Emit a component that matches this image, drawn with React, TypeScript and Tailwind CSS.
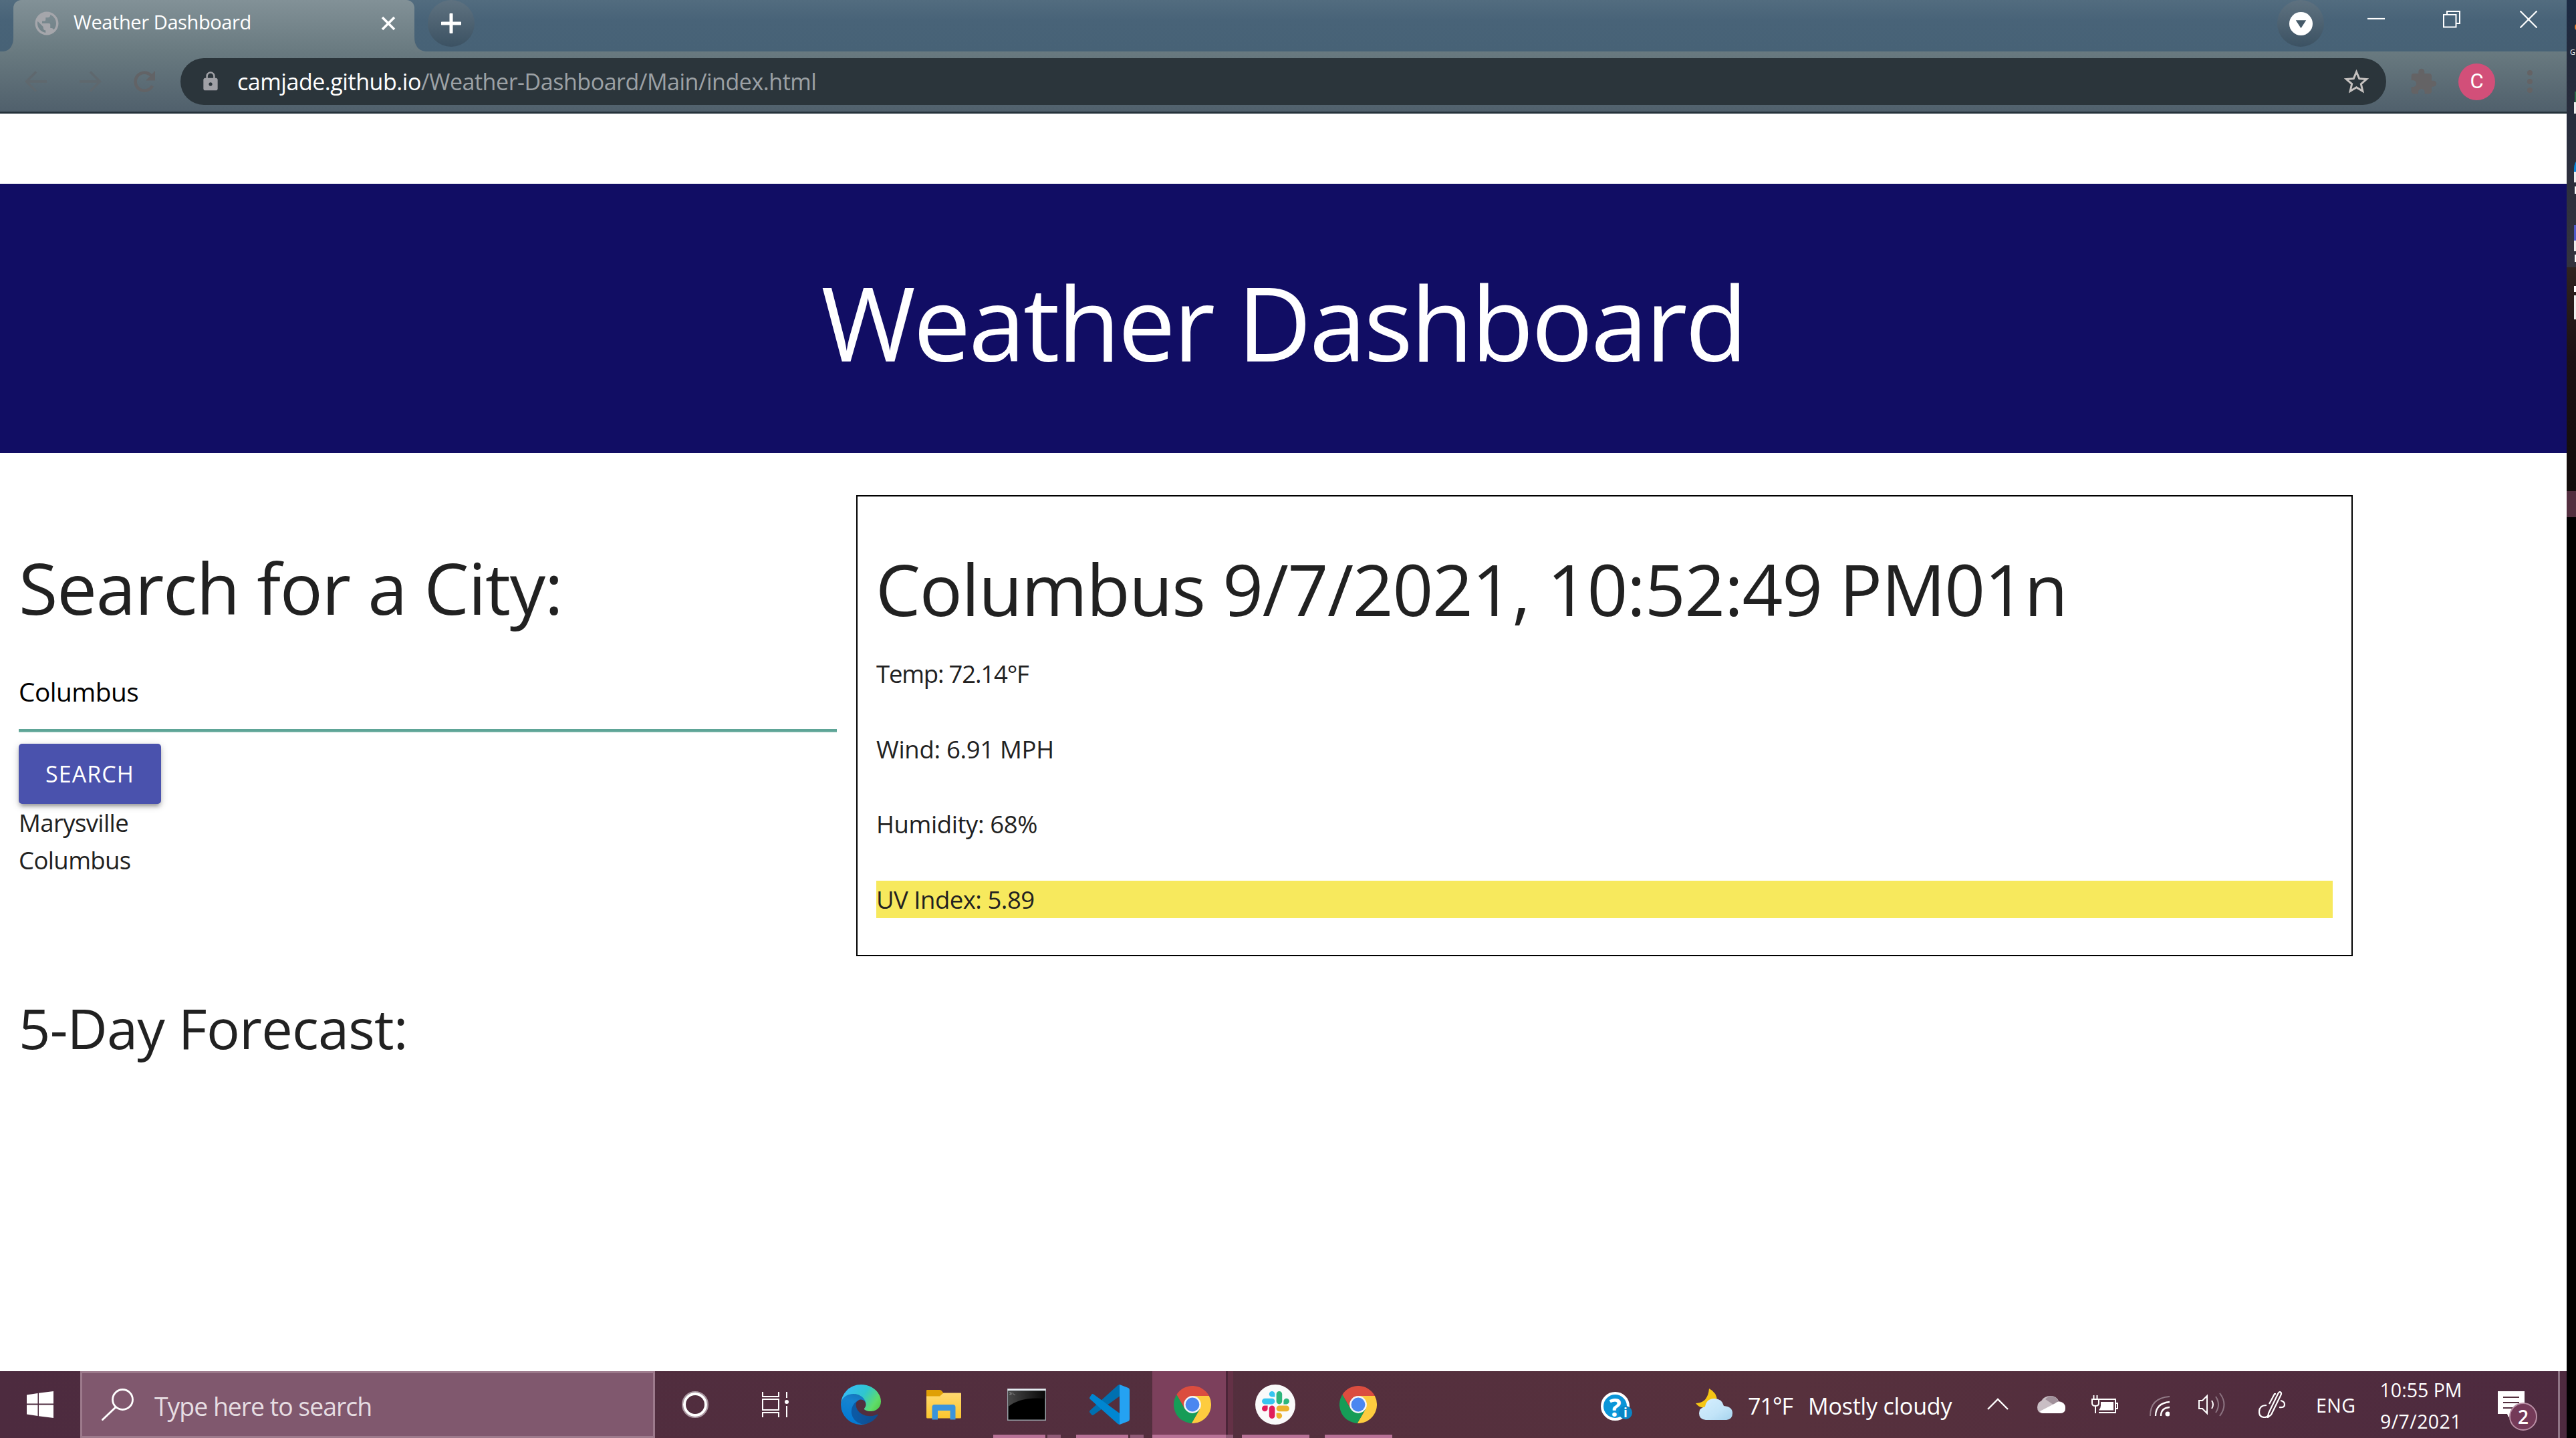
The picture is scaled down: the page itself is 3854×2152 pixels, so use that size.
import type { ReactNode } from 'react';
import { MdExtension, MdLock, MdPublic, MdStarBorder } from 'react-icons/md';

/* ---------- Application icons ---------- */

function ChromeIcon() {
  return (
    <svg viewBox="0 0 100 100" className="h-[56px] w-[56px]">
      <path d="M94.4 27A50 50 0 0 1 47.7 100L69.9 61.5L50 50L50 27Z" fill="#fdcc3f" />
      <path d="M47.7 100A50 50 0 0 1 7.9 23L30.1 61.5L50 50L69.9 61.5Z" fill="#169c57" />
      <path d="M7.9 23A50 50 0 0 1 94.4 27L50 27L50 50L30.1 61.5Z" fill="#db4d3f" />
      <circle cx="50" cy="50" r="23" fill="#f3f5f8" />
      <circle cx="50" cy="50" r="18.6" fill="#4a87f0" />
    </svg>
  );
}

function EdgeIcon() {
  return (
    <svg viewBox="0 0 256 256" className="h-[60px] w-[60px]">
      <defs>
        <linearGradient id="edge-dark" x1="0.2" y1="0.7" x2="1" y2="0.7">
          <stop offset="0" stopColor="#0c59a4" />
          <stop offset="1" stopColor="#114a8b" />
        </linearGradient>
        <linearGradient id="edge-mid" x1="0.6" y1="0" x2="0.3" y2="1">
          <stop offset="0" stopColor="#1673b8" />
          <stop offset="0.3" stopColor="#1583d0" />
          <stop offset="1" stopColor="#0078d4" />
        </linearGradient>
        <linearGradient id="edge-top" x1="0" y1="0.3" x2="1" y2="0.75">
          <stop offset="0" stopColor="#38bbfa" />
          <stop offset="0.5" stopColor="#2fc6cf" />
          <stop offset="0.85" stopColor="#5fdc6a" />
          <stop offset="1" stopColor="#55cf52" />
        </linearGradient>
      </defs>
      <g transform="translate(-4.63 -4.92)">
        <path
          fill="url(#edge-dark)"
          d="M235.68 195.46a93.73 93.73 0 0 1-10.54 4.71 101.87 101.87 0 0 1-35.9 6.46c-47.32 0-88.54-32.55-88.54-74.32A31.48 31.48 0 0 1 117.13 105c-42.8 1.8-53.8 46.4-53.8 72.53 0 73.88 68.09 81.37 82.76 81.37 7.91 0 19.84-2.3 27-4.56l1.31-.44a128.34 128.34 0 0 0 66.6-52.8 4 4 0 0 0-5.32-5.64Z"
        />
        <path
          fill="url(#edge-mid)"
          d="M110.34 246.34A79.2 79.2 0 0 1 87.6 225a80.72 80.72 0 0 1 29.53-120c3.12-1.47 8.45-4.13 15.54-4a32.35 32.35 0 0 1 25.69 13 31.88 31.88 0 0 1 6.36 18.66c0-.21 24.46-79.6-80-79.6-43.9 0-80 41.66-80 78.21a130.15 130.15 0 0 0 12.11 56 128 128 0 0 0 156.38 67.11 75.55 75.55 0 0 1-62.78-8Z"
        />
        <path
          fill="url(#edge-top)"
          d="M156.94 153.78c-.81 1.05-3.3 2.5-3.3 5.66 0 2.61 1.7 5.12 4.72 7.23 14.38 10 41.49 8.68 41.56 8.68a59.56 59.56 0 0 0 30.27-8.35 61.38 61.38 0 0 0 30.43-52.88c.26-22.41-8-37.31-11.34-43.91C228.09 28.76 182.35 4.92 132.61 4.92a128 128 0 0 0-128 126.2c.48-36.54 36.8-66.05 80-66.05 3.5 0 23.46.34 42 10.07 16.34 8.58 24.9 18.94 30.85 29.21 6.18 10.67 7.28 24.15 7.28 29.52s-2.74 13.33-7.8 19.91Z"
        />
      </g>
    </svg>
  );
}

function FolderIcon() {
  return (
    <svg viewBox="0 0 52 46" className="h-[46px] w-[52px]">
      <defs>
        <linearGradient id="folder" x1="0" y1="0" x2="0" y2="1">
          <stop offset="0" stopColor="#ffd970" />
          <stop offset="1" stopColor="#fbc62e" />
        </linearGradient>
      </defs>
      <path d="M1 1h19q2 0 3 1.500l3 4v8H0V2q0-1 1-1z" fill="#e0a005" />
      <path d="M0 10.500h20l5.500-5H51q1 0 1 1V42q0 1.500-1.500 1.500h-49Q0 43.500 0 42z" fill="url(#folder)" />
      <path d="M8.500 45.500V27q0-4 4-4h27q4 0 4 4v18.500h-8V32h-18.500v13.500z" fill="#3a94dc" />
    </svg>
  );
}

function TerminalIcon() {
  return (
    <svg viewBox="0 0 58 48" className="h-[48px] w-[58px]">
      <defs>
        <linearGradient id="term" x1="0" y1="0" x2="1" y2="0">
          <stop offset="0" stopColor="#484848" />
          <stop offset="1" stopColor="#080808" />
        </linearGradient>
      </defs>
      <rect width="58" height="48" fill="#98a0a6" />
      <rect x="0.500" y="0.500" width="57" height="2.500" fill="#e8edf3" />
      <rect x="1.500" y="3.500" width="55" height="43" fill="#000" />
      <path d="M1.500 3.500h55v11.500Q20 12 1.500 27z" fill="url(#term)" />
      <path d="M3 6h2v3H3M6 6v3M8 6l1.500 3M10 9.500h2" stroke="#9a9a9a" strokeWidth="0.800" fill="none" />
    </svg>
  );
}

function VsCodeIcon() {
  return (
    <svg viewBox="0 0 60 60" className="h-[60px] w-[60px]">
      <path d="M42.500 1L45 0v17.500L6 45.500q-1.500 1-3-.5L.5 42q-1-1.500 0-3z" fill="#0070b0" />
      <path d="M6 14.500L45 43v17l-2.500-1L.5 21.500q-1-1.200 0-2.500L3 15q1.500-1.500 3-.5z" fill="#0086d1" />
      <path d="M45 0l13 5q2 1 2 3v44q0 2-2 3l-13 5z" fill="#24a2f2" />
    </svg>
  );
}

function SlackIcon() {
  return (
    <div className="flex h-[60px] w-[60px] items-center justify-center rounded-full bg-[#fafafa]">
      <svg viewBox="0 0 122.8 122.8" className="h-[41px] w-[41px]">
        <path fill="#e01e5a" d="M25.800 77.600c0 7.100-5.800 12.900-12.900 12.900S0 84.700 0 77.600s5.800-12.900 12.900-12.900h12.900v12.900zm6.500 0c0-7.100 5.800-12.900 12.900-12.900s12.900 5.800 12.900 12.900v32.300c0 7.100-5.800 12.900-12.900 12.900s-12.900-5.800-12.900-12.900V77.600z" />
        <path fill="#36c5f0" d="M45.200 25.800c-7.100 0-12.900-5.800-12.900-12.900S38.100 0 45.200 0s12.900 5.800 12.900 12.900v12.900H45.200zm0 6.500c7.100 0 12.900 5.800 12.900 12.900s-5.800 12.900-12.900 12.900H12.900C5.800 58.100 0 52.300 0 45.200s5.800-12.900 12.900-12.900h32.300z" />
        <path fill="#2eb67d" d="M97 45.200c0-7.100 5.800-12.900 12.900-12.900s12.900 5.800 12.900 12.900-5.800 12.900-12.900 12.900H97V45.200zm-6.500 0c0 7.100-5.800 12.900-12.900 12.900s-12.900-5.800-12.900-12.900V12.900C64.700 5.800 70.500 0 77.600 0s12.900 5.800 12.900 12.900v32.300z" />
        <path fill="#ecb22e" d="M77.600 97c7.100 0 12.900 5.800 12.900 12.900s-5.800 12.900-12.900 12.900-12.900-5.800-12.900-12.900V97h12.900zm0-6.500c-7.100 0-12.900-5.800-12.900-12.900s5.800-12.900 12.900-12.900h32.300c7.100 0 12.900 5.800 12.900 12.900s-5.800 12.900-12.900 12.900H77.600z" />
      </svg>
    </div>
  );
}

/* ---------- Browser chrome ---------- */

function TabStrip() {
  return (
    <div className="flex h-[77px] items-start bg-linear-to-b from-[#526c7f] via-[#486378] via-40% to-[#476276]">
      <svg viewBox="0 0 15 77" className="ml-[5px] h-[77px] w-[15px]">
        <path d="M15 55v22H0q15-2 15-22z" fill="#6b7b81" />
      </svg>
      <div className="flex h-[77px] w-[600px] items-start rounded-t-[12px] bg-linear-to-b from-[#829197] to-[#697a80] pt-[8px] pr-[28px] pl-[29px]">
        <MdPublic className="mt-[6px] h-[42px] w-[42px] text-[#a5a6ab]" />
        <div className="ml-[19px] text-[29px] leading-[50px] tracking-[-0.4px] text-white">Weather Dashboard</div>
        <svg viewBox="0 0 22 22" className="mt-[16px] ml-auto h-[22px] w-[22px]">
          <path d="M2 2L20 20M20 2L2 20" stroke="#fff" strokeWidth="3.600" />
        </svg>
      </div>
      <svg viewBox="0 0 17 77" className="h-[77px] w-[17px]">
        <path d="M0 55v22h17Q0 75 0 55z" fill="#6b7b81" />
      </svg>
      <div className="ml-[3px] flex h-[70px] w-[70px] items-center justify-center rounded-full bg-linear-to-b from-[#5f7280] to-[#3c5263]">
        <svg viewBox="0 0 30 30" className="h-[30px] w-[30px]">
          <path d="M15 1.500v27M1.500 15h27" stroke="#fff" strokeWidth="5" strokeLinecap="round" />
        </svg>
      </div>
      <div className="ml-auto flex h-[70px] w-[70px] items-center justify-center rounded-full bg-linear-to-b from-[#5f7280] to-[#3c5263]">
        <svg viewBox="0 0 36 36" className="h-[35px] w-[35px]">
          <circle cx="18" cy="18" r="18" fill="#fff" />
          <path d="M10 12.500h16L18 25z" fill="#455a69" />
        </svg>
      </div>
      <svg viewBox="0 0 26 26" className="mt-[16px] ml-[65px] h-[26px] w-[26px]">
        <path d="M0 12h26" stroke="#fff" strokeWidth="2.200" />
      </svg>
      <svg viewBox="0 0 26 26" className="mt-[16px] ml-[87px] h-[26px] w-[26px]" fill="none" stroke="#fff" strokeWidth="2">
        <path d="M1 6h18.500v18.500H1zM6 6V1h19v18h-5" />
      </svg>
      <svg viewBox="0 0 26 26" className="mt-[16px] mr-[44px] ml-[89px] h-[26px] w-[26px]">
        <path d="M.5.5l25 25M25.500.5l-25 25" stroke="#fff" strokeWidth="2.200" />
      </svg>
    </div>
  );
}

function Toolbar() {
  return (
    <div className="flex h-[93px] items-center border-b-[3px] border-[#25323b] bg-linear-to-b from-[#697a80] to-[#50606c]">
      <svg viewBox="0 0 34 32" className="ml-[37px] h-[32px] w-[34px]" fill="none" stroke="#5f686e" strokeWidth="3.500">
        <path d="M33 16H3M17 1.500L2.500 16L17 30.500" />
      </svg>
      <svg viewBox="0 0 34 32" className="ml-[47px] h-[32px] w-[34px]" fill="none" stroke="#5f686e" strokeWidth="3.500">
        <path d="M1 16h30M17 1.500L31.500 16L17 30.500" />
      </svg>
      <svg viewBox="0 0 34 32" className="ml-[47px] h-[32px] w-[34px]">
        <path d="M29 22.500A13.500 13.500 0 1 1 27 7" fill="none" stroke="#626366" strokeWidth="4.500" />
        <path d="M33 0v14.500H19z" fill="#626366" />
      </svg>
      <div className="ml-[37px] flex h-[70px] w-[3300px] items-center rounded-full bg-[#2b353b] pr-[22px] pl-[29px]">
        <MdLock className="h-[32px] w-[32px] text-[#a0a1a6]" />
        <div className="ml-[24px] text-[34px] leading-[64px] tracking-[-0.45px] text-white">camjade.github.io</div>
        <div className="text-[34px] leading-[64px] tracking-[-0.46px] text-[#9ca1a5]">/Weather-Dashboard/Main/index.html</div>
        <MdStarBorder className="ml-auto h-[45px] w-[45px] text-[#c5c1bf]" />
      </div>
      <MdExtension className="ml-[34px] h-[43px] w-[43px] text-[#646365]" />
      <div className="ml-[31px] flex h-[55px] w-[55px] items-center justify-center rounded-full bg-[#d24f79] font-['Roboto',sans-serif] text-[31px] text-white">
        C
      </div>
      <div className="ml-[48px] flex flex-col gap-[5px]">
        <div className="h-[8px] w-[8px] rounded-full bg-[#646365]" />
        <div className="h-[8px] w-[8px] rounded-full bg-[#646365]" />
        <div className="h-[8px] w-[8px] rounded-full bg-[#646365]" />
      </div>
    </div>
  );
}

/* ---------- Web page ---------- */

function SearchColumn() {
  return (
    <section className="ml-[28px] w-[1224px] pt-[141px]">
      <h3 className="text-[106.500px] leading-[120px] tracking-[-1.250px] whitespace-nowrap">Search for a City:</h3>
      <div className="mt-[41px] h-[115px] border-b-4 border-[#5ea597] text-[38.800px] leading-[111px] tracking-[-0.500px] text-black shadow-[0_1px_0_0_#a3cbc3]">
        Columbus
      </div>
      <button className="mt-[18px] flex h-[90px] w-[213px] items-center justify-center rounded-[5px] bg-[#4a52ad] text-[34px] leading-[90px] tracking-[1.100px] text-white shadow-[0_5px_5px_0_rgba(0,0,0,0.14),0_8px_3px_-5px_rgba(0,0,0,0.12),0_3px_12px_0_rgba(0,0,0,0.2)]">
        SEARCH
      </button>
      <div className="text-[36.500px] leading-[56.250px] tracking-[-0.600px]">
        <div>Marysville</div>
        <div>Columbus</div>
      </div>
    </section>
  );
}

function CurrentWeather() {
  return (
    <section className="mt-[63px] ml-[29px] h-[690px] w-[2239px] border-2 border-black px-[28px] pt-[78px]">
      <h3 className="-ml-[1px] text-[106.500px] leading-[120px] tracking-[-1.300px] whitespace-nowrap">
        Columbus 9/7/2021, 10:52:49 PM01n
      </h3>
      <div className="mt-[39px] flex flex-col gap-[56.250px] text-[36.500px] leading-[56.250px]">
        <p className="tracking-[-1.200px]">Temp: 72.14°F</p>
        <p className="tracking-[-0.300px]">Wind: 6.91 MPH</p>
        <p className="tracking-[-0.400px]">Humidity: 68%</p>
        <p className="bg-[#f7e95d] tracking-[-0.500px]">UV Index: 5.89</p>
      </div>
    </section>
  );
}

function WeatherPage() {
  return (
    <main className="h-[1882px] bg-white pt-[105px] text-[#212121]">
      <header className="flex h-[403px] items-center justify-center bg-[#110d64] pt-[10px]">
        <h1 className="text-[153px] leading-[1] tracking-[-3.250px] text-white">Weather Dashboard</h1>
      </header>
      <div className="flex items-start">
        <SearchColumn />
        <CurrentWeather />
      </div>
      <h4 className="mt-[60px] ml-[28px] text-[83px] leading-[94px] tracking-[-0.800px]">5-Day Forecast:</h4>
    </main>
  );
}

/* ---------- Taskbar ---------- */

type Running = 'none' | 'single' | 'stacked' | 'active';

function TaskButton({ children, running = 'none' }: { children: ReactNode; running?: Running }) {
  return (
    <div className="relative h-[100px] w-[124px]">
      {running === 'active' && (
        <div className="absolute inset-y-0 left-[2px] flex w-[121px]">
          <div className="w-[110px] bg-[#7c405c]" />
          <div className="w-[3px] bg-[#4b2538]" />
          <div className="w-[8px] bg-[#643146]" />
        </div>
      )}
      <div className="relative flex h-full items-center justify-center">{children}</div>
      {running === 'single' && <div className="absolute bottom-0 left-[12px] h-[5px] w-[101px] bg-[#b87297]" />}
      {running === 'stacked' && (
        <div className="absolute bottom-0 left-[12px] flex h-[5px] gap-[3px]">
          <div className="w-[78px] bg-[#b87297]" />
          <div className="w-[20px] bg-[#905b77]" />
        </div>
      )}
      {running === 'active' && (
        <div className="absolute bottom-0 left-[2px] flex h-[5px]">
          <div className="w-[110px] bg-[#b87297]" />
          <div className="w-[11px] bg-[#905b77]" />
        </div>
      )}
    </div>
  );
}

function HelpIcon() {
  return (
    <div className="relative h-[43px] w-[43px] rounded-full border-4 border-white bg-[#0a95d8]">
      <div className="absolute inset-0 flex items-center justify-center text-[38px] leading-none font-bold text-white">?</div>
      <div className="absolute -right-[8px] -bottom-[2px] flex h-[20px] w-[20px] items-center justify-center rounded-full bg-[#0a85c6] text-[19px] leading-none font-bold text-white">
        i
      </div>
    </div>
  );
}

function CloudMoonIcon() {
  return (
    <svg viewBox="0 0 56 48" className="h-[48px] w-[56px]">
      <defs>
        <linearGradient id="cloud" x1="0" y1="0" x2="1" y2="1">
          <stop offset="0" stopColor="#d6efff" />
          <stop offset="0.600" stopColor="#c2e4f8" />
          <stop offset="1" stopColor="#a5d3ee" />
        </linearGradient>
      </defs>
      <path d="M20 0q12 6 12 19L16 28Q6 30 0 22q18 0 20-22z" fill="#f6c614" />
      <path d="M15 47Q5 46 5 37q0-8 9-10 2-12 14-12 11 0 14 11 13 1 13 11 0 9-9 10z" fill="url(#cloud)" />
    </svg>
  );
}

function SystemTray() {
  return (
    <div className="ml-auto flex h-full items-center text-white">
      <div className="mt-[5px]">
        <HelpIcon />
      </div>
      <div className="ml-[99px]">
        <CloudMoonIcon />
      </div>
      <div className="ml-[22px] w-[90px] pt-[3px] text-[34px] leading-[100px] tracking-[-1px] whitespace-nowrap">71°F</div>
      <div className="w-[218px] pt-[3px] text-[34px] leading-[100px] tracking-[-0.200px] whitespace-nowrap">Mostly cloudy</div>
      <svg viewBox="0 0 32 18" className="-mt-[2px] ml-[50px] h-[18px] w-[32px]">
        <path d="M1 17L16 2l15 15" fill="none" stroke="#fff" strokeWidth="2.400" />
      </svg>
      <svg viewBox="0 0 42 26" className="ml-[43px] h-[26px] w-[42px]">
        <path d="M9 26Q0 26 0 17q0-7 6-9.500Q10 0 20 0q9 0 12 8 10 1 10 10 0 8-8 8z" fill="#c9bec4" />
        <path d="M12 5Q20-4 29 4q2 2 3 4L24 13z" fill="#a0909a" />
        <path d="M4 23L27 11q3-3 7-2 8 2 8 9 0 8-8 8H9q-4 0-5-3z" fill="#fff" />
      </svg>
      <svg viewBox="0 0 40 28" className="ml-[39px] h-[28px] w-[40px]">
        <path d="M11 6h25v20H11M36 12h3v8h-3" fill="none" stroke="#fff" strokeWidth="2" />
        <path d="M14 10h19v12.500H11q3-3 3-7z" fill="#fff" />
        <path d="M3.500 0v6M8.500 0v6M1 6h10v6q0 4-5 4t-5-4zM6 16v11" fill="none" stroke="#fff" strokeWidth="2" />
      </svg>
      <svg viewBox="0 0 30 31" className="mt-[4px] ml-[47px] h-[31px] w-[30px]" fill="none">
        <path d="M1 30Q1 3 30 1" stroke="#937c88" strokeWidth="2" />
        <path d="M9 30Q9 11 30 9M17 30q0-12 13-13" stroke="#fff" strokeWidth="2.300" />
        <circle cx="27" cy="27" r="3.500" fill="#fff" />
      </svg>
      <svg viewBox="0 0 40 36" className="ml-[43px] h-[36px] w-[40px]" fill="none" strokeWidth="2">
        <path d="M1 12h5l7-7v26l-7-7H1z" stroke="#fff" />
        <path d="M20 12q4 6 0 12" stroke="#fff" />
        <path d="M26 6q8 12 0 24M32 1q13 17 0 34" stroke="#8c7481" />
      </svg>
      <svg viewBox="0 0 40 40" className="ml-[50px] h-[40px] w-[40px]" fill="none" stroke="#fff" strokeWidth="2.200">
        <path d="M15 33L29 4q2-4 4-2.500 2 1.500 0 5L19 35l-5 4zM26 4h-2l-8 15M12 21Q1 21 1 31q0 8 8 8 6 0 6-6M33 14q6 1 6 6t-8 4" />
      </svg>
      <div className="ml-[46px] w-[62px] pt-[2px] text-[28.500px] leading-[100px] tracking-[0.500px]">ENG</div>
      <div className="ml-[24px] flex w-[142px] flex-col items-center pt-[3px] text-[28.500px] leading-[47px]">
        <div>10:55 PM</div>
        <div className="tracking-[0.400px]">9/7/2021</div>
      </div>
      <div className="relative ml-[44px] h-[40px] w-[40px]">
        <svg viewBox="0 0 40 40" className="h-[40px] w-[40px]">
          <path d="M0 0h40v34H21l-5 5-2-5H0z" fill="#fff" />
          <path d="M8 9h24M8 17h24M8 25h24" stroke="#55303f" strokeWidth="2.200" />
        </svg>
        <div className="absolute top-[17px] left-[17px] flex h-[42px] w-[42px] items-center justify-center rounded-full border-2 border-[#b98fa5] bg-[#743a58] text-[28px] leading-none font-semibold">
          2
        </div>
      </div>
      <div className="ml-[50px] h-full w-[3px] bg-[#8f7585]" />
      <div className="w-[10px]" />
    </div>
  );
}

function Taskbar() {
  return (
    <footer className="flex h-[100px] items-center bg-linear-to-r from-[#4d2b3f] via-[#57313d] via-70% to-[#4d2a3f]">
      <div className="flex w-[120px] justify-center">
        <svg viewBox="0 0 40 40" className="h-[40px] w-[40px]">
          <path d="M0 5.500L16.500 3v15.500H0zM18 2.800L40 0v18.500H18zM0 20.500h16.500V37L0 34.500zM18 20.500h22V40L18 37.200z" fill="#fff" />
        </svg>
      </div>
      <div className="flex h-full w-[860px] items-center border-[3px] border-[#9d7a8c] bg-[#80586e] pl-[29px]">
        <svg viewBox="0 0 48 48" className="h-[48px] w-[48px]">
          <circle cx="31.500" cy="16.500" r="15" fill="none" stroke="#fff" strokeWidth="2.800" />
          <path d="M21 28L1.500 46.500" stroke="#fff" strokeWidth="3" strokeLinecap="round" />
        </svg>
        <div className="ml-[31px] pt-[5px] text-[37.400px] leading-[89px] tracking-[-1px] text-[#e6dde2]">Type here to search</div>
      </div>
      <div className="flex w-[120px] justify-center">
        <div className="h-[40px] w-[40px] rounded-full border-[2px] border-[#ab98a2]">
          <div className="h-[36px] w-[36px] rounded-full border-[4px] border-white" />
        </div>
      </div>
      <div className="mr-[6px] flex w-[120px] justify-center">
        <svg viewBox="0 0 40 38" className="h-[38px] w-[40px]" fill="none" stroke="#fff" strokeWidth="2">
          <path d="M1 0v7h24V0M1 38v-7h24v7M1 11h24v16H1zM37 0v9M37 21v17" />
          <circle cx="37" cy="15" r="3" fill="#fff" stroke="none" />
        </svg>
      </div>
      <TaskButton>
        <EdgeIcon />
      </TaskButton>
      <TaskButton>
        <FolderIcon />
      </TaskButton>
      <TaskButton running="stacked">
        <TerminalIcon />
      </TaskButton>
      <TaskButton running="stacked">
        <VsCodeIcon />
      </TaskButton>
      <TaskButton running="active">
        <ChromeIcon />
      </TaskButton>
      <TaskButton running="single">
        <SlackIcon />
      </TaskButton>
      <TaskButton running="single">
        <ChromeIcon />
      </TaskButton>
      <SystemTray />
    </footer>
  );
}

/* Sliver of the neighbouring monitor's desktop. */
function SecondMonitor() {
  return (
    <aside className="flex w-[14px] flex-col bg-black">
      <div className="relative h-[400px] overflow-hidden bg-linear-to-b from-[#1b2b45] via-[#232a3c] via-20% to-[#34333e]">
        <div className="absolute top-[35px] left-[12px] h-[11px] w-[11px] rounded-full bg-[#e07b2c]" />
        <div className="absolute top-[68px] left-[5px] text-[11px] leading-[20px] text-white">G</div>
        <div className="absolute top-[137px] left-[12px] h-[16px] w-[4px] bg-[#2c6b4c]" />
        <div className="absolute top-[153px] left-[11px] h-[17px] w-[4px] bg-[#ededed]" />
        <div className="absolute top-[232px] left-[11px] h-[25px] w-[20px] rounded-tl-full bg-[#0a84d8]" />
        <div className="absolute top-[257px] left-[11px] h-[16px] w-[4px] bg-[#ededed]" />
        <div className="absolute top-[279px] left-[12px] h-[11px] w-[3px] bg-white" />
        <div className="absolute top-[337px] left-[11px] h-[23px] w-[4px] bg-[#5059c9]" />
        <div className="absolute top-[360px] left-[11px] h-[16px] w-[4px] bg-[#ededed]" />
        <div className="absolute top-[381px] left-[12px] h-[11px] w-[3px] bg-white" />
      </div>
      <div className="relative h-[335px] bg-linear-to-b from-[#30231f] via-[#1d1114] via-40% to-[#120c0b]">
        <div className="absolute top-[28px] left-[11px] h-[9px] w-[3px] bg-white" />
        <div className="absolute top-[42px] left-[11px] h-[36px] w-[3px] bg-[#efefef]" />
      </div>
      <div className="h-[39px] bg-[#532f3f]" />
    </aside>
  );
}

export default function App() {
  return (
    <div className="flex h-[2152px] w-[3854px] overflow-hidden bg-black font-['Open_Sans','Noto_Sans',sans-serif]">
      <div className="w-[3840px]">
        <TabStrip />
        <Toolbar />
        <WeatherPage />
        <Taskbar />
      </div>
      <SecondMonitor />
    </div>
  );
}
